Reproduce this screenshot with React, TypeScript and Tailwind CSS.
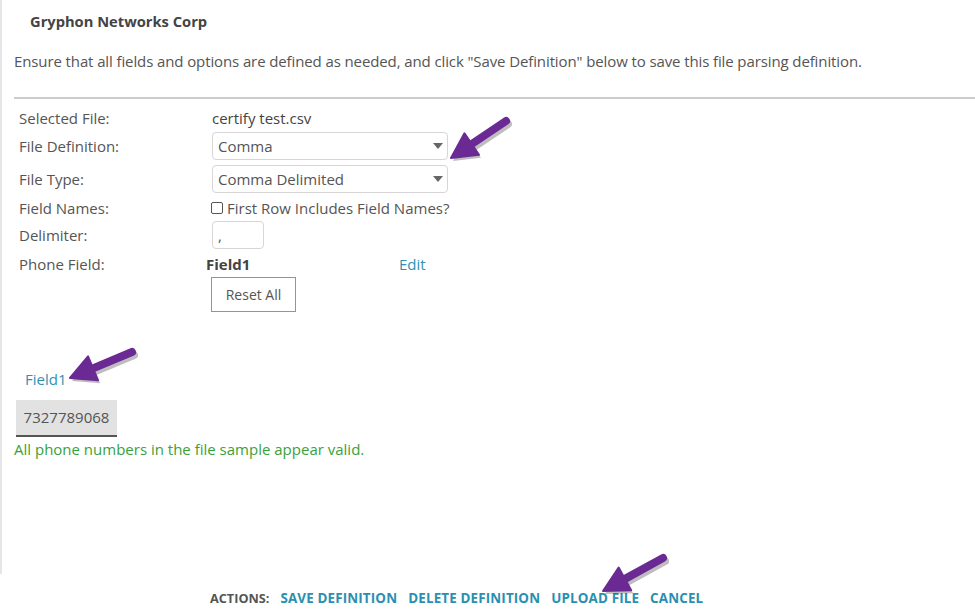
import React from "react"

type Pt = [number, number]

// purple callout arrow, drawn from tail to tip
function Arrow({ tail, tip }: { tail: Pt; tip: Pt }) {
  const dx = tip[0] - tail[0]
  const dy = tip[1] - tail[1]
  const len = Math.hypot(dx, dy)
  const ux = dx / len
  const uy = dy / len
  const headLen = 25
  const headHalf = 13
  const bx = tip[0] - ux * headLen
  const by = tip[1] - uy * headLen
  const px = -uy
  const py = ux
  const head = `${tip[0]},${tip[1]} ${bx + px * headHalf},${by + py * headHalf} ${bx - px * headHalf},${by - py * headHalf}`
  return (
    <g>
      <g transform="translate(2,3)" opacity="0.25">
        <line x1={tail[0]} y1={tail[1]} x2={bx + ux * 4} y2={by + uy * 4} stroke="#000" strokeWidth={8} strokeLinecap="round" />
        <polygon points={head} fill="#000" />
      </g>
      <line x1={tail[0]} y1={tail[1]} x2={bx + ux * 4} y2={by + uy * 4} stroke="#6b2a93" strokeWidth={8} strokeLinecap="round" />
      <polygon points={head} fill="#6b2a93" strokeLinejoin="round" stroke="#6b2a93" strokeWidth={2} />
    </g>
  )
}

function SelectBox({ value }: { value: string }) {
  return (
    <div className="flex h-7 w-[236px] items-center justify-between rounded border border-[#d6d6d6] bg-white pl-[5px] pr-[4px]">
      <span>{value}</span>
      <svg width="10" height="6" viewBox="0 0 10 6">
        <polygon points="0,0 10,0 5,6" fill="#666" />
      </svg>
    </div>
  )
}

export default function App() {
  return (
    <div
      className="relative h-[610px] w-[975px] overflow-hidden bg-white text-[#555]"
      style={{ fontFamily: '"Open Sans", "Noto Sans", sans-serif' }}
    >
      <div className="h-[574px] border-l-2 border-[#e6e6e6]">
        <div className="pl-[28px] pt-[11px] text-[14.7px] font-bold leading-5 text-[#444]">Gryphon Networks Corp</div>

        <p className="mt-[19px] pl-[12px] text-[15px] leading-[22px] tracking-[-0.11px]">
          Ensure that all fields and options are defined as needed, and click "Save Definition" below to save this file parsing definition.
        </p>

        <div className="ml-[12px] mt-[25px] border-t-2 border-[#cccccc]" />

        <div className="pl-[17px] text-[15px] leading-[22px]">
          <div className="mt-[8px] flex">
            <div className="w-[193px]">Selected File:</div>
            <div className="text-[#444]">certify test.csv</div>
          </div>

          <div className="mt-[3px] flex items-center">
            <div className="w-[193px]">File Definition:</div>
            <SelectBox value="Comma" />
          </div>

          <div className="mt-[5px] flex items-center">
            <div className="w-[193px]">File Type:</div>
            <SelectBox value="Comma Delimited" />
          </div>

          <div className="mt-[4px] flex items-center">
            <div className="w-[192px]">Field Names:</div>
            <div className="flex items-center">
              <span className="mr-[4px] inline-block h-[12px] w-[12px] rounded-[2px] border border-[#555]" />
              <span>First Row Includes Field Names?</span>
            </div>
          </div>

          <div className="mt-[2px] flex items-center">
            <div className="w-[193px]">Delimiter:</div>
            <div className="flex h-7 w-[52px] items-center rounded border border-[#d6d6d6] pl-[5px]">,</div>
          </div>

          <div className="mt-[4px] flex">
            <div className="w-[187px]">Phone Field:</div>
            <div className="w-[193px] font-bold text-[#444]">Field1</div>
            <div className="text-[#2e93b3]">Edit</div>
          </div>

          <div className="mt-[2px] pl-[192px]">
            <button className="h-[35px] w-[85px] border border-[#5aa9bf] bg-white text-[14px] text-[#555]">Reset All</button>
          </div>
        </div>

        <div className="mt-[56px] pl-[23px] text-[15px] leading-[22px] text-[#2e93b3]">Field1</div>

        <div className="ml-[14px] mt-[10px] flex h-[37px] w-[101px] items-center justify-center border-b-2 border-[#555] bg-[#e2e2e2] text-[15px]">
          7327789068
        </div>

        <div className="mt-[1px] pl-[12px] text-[15px] leading-[22px] text-[#3aa13a]">
          All phone numbers in the file sample appear valid.
        </div>
      </div>

      <div className="mt-[15px] flex items-baseline pl-[210px] font-bold leading-[18px]">
        <span className="mr-[11px] text-[12.7px] text-[#555]">ACTIONS:</span>
        <div className="flex gap-[11px] text-[13.4px] tracking-[0.15px] text-[#2a8fb0]">
          <span>SAVE DEFINITION</span>
          <span>DELETE DEFINITION</span>
          <span>UPLOAD FILE</span>
          <span>CANCEL</span>
        </div>
      </div>

      <svg className="pointer-events-none absolute left-0 top-0" width="975" height="610">
        <Arrow tail={[506, 121]} tip={[451, 158]} />
        <Arrow tail={[132, 352]} tip={[70, 378]} />
        <Arrow tail={[663, 558]} tip={[603, 591]} />
      </svg>
    </div>
  )
}
